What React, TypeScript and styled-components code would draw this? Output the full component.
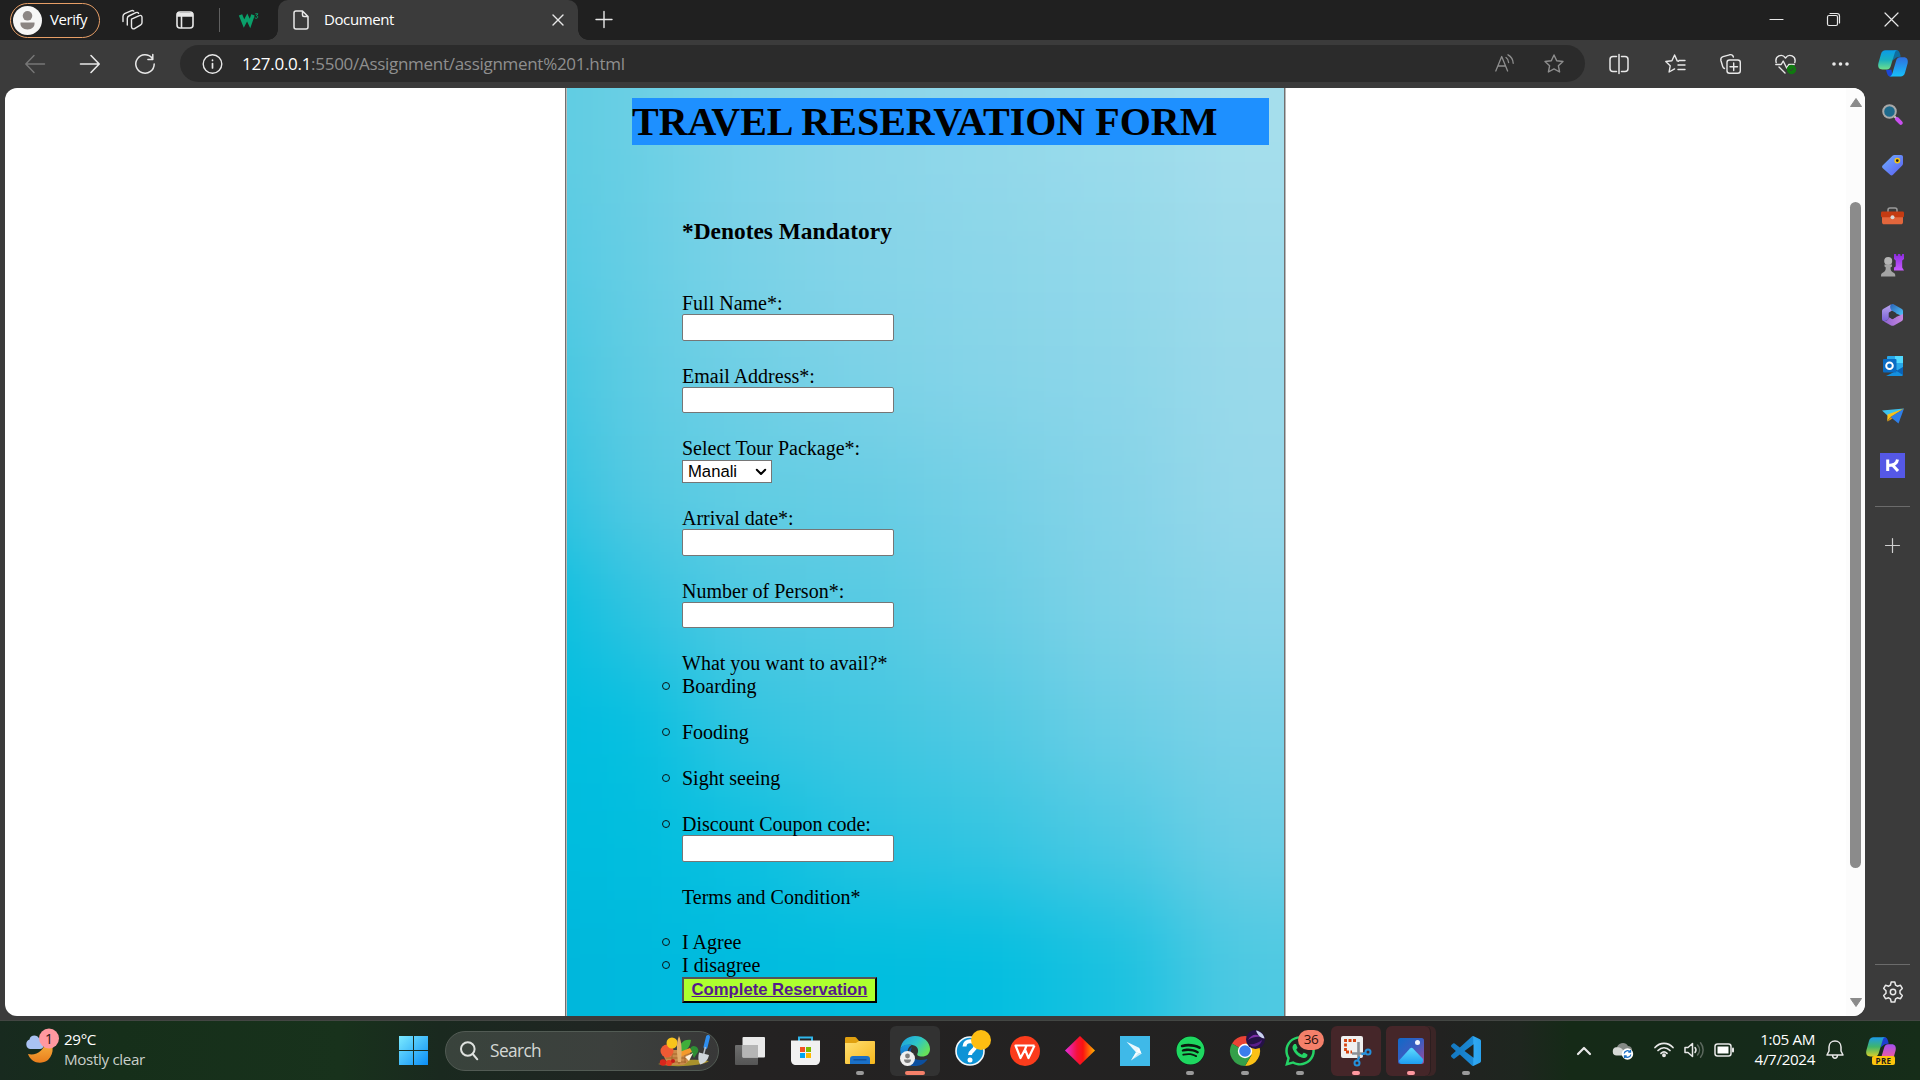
import React from "react";
import styled, { createGlobalStyle } from "styled-components";
import { FaSpotify, FaWhatsapp } from "react-icons/fa";

const uiFont = `"Segoe UI", "Open Sans", "Noto Sans", sans-serif`;
const serif = `"Times New Roman", "Liberation Serif", serif`;

const GlobalStyle = createGlobalStyle`
  *, *::before, *::after { box-sizing: border-box; }
  body { margin: 0; background: #3b3b3b; overflow: hidden; }
  svg { display: block; flex: none; overflow: visible; }
`;

const Screen = styled.div`
  width: 1920px;
  height: 1080px;
  display: flex;
  flex-direction: column;
  background: #3b3b3b;
  color: #fff;
  font-family: ${uiFont};
  overflow: hidden;
`;

/* ---------- tab strip ---------- */
const TabStrip = styled.header`
  height: 40px;
  flex: none;
  display: flex;
  align-items: center;
  background: #202020;
`;
const Profile = styled.div`
  width: 90px;
  height: 35px;
  margin-left: 10px;
  padding-left: 2px;
  display: flex;
  align-items: center;
  gap: 8px;
  border: 1.5px solid #e79e66;
  border-radius: 18px;
  font-size: 15px;
  line-height: 20px;
  letter-spacing: -0.45px;
  span { padding-bottom: 2px; }
`;
const Gap = styled.div<{ $w: number }>`
  width: ${(p) => p.$w}px;
  flex: none;
`;
const TabDivider = styled.div`
  width: 1px;
  height: 24px;
  background: #606060;
`;
const ActiveTab = styled.div`
  position: relative;
  width: 300px;
  height: 40px;
  padding: 0 15px 0 15px;
  display: flex;
  align-items: center;
  background: #3b3b3b;
  border-radius: 10px 10px 0 0;
  font-size: 15px;
  letter-spacing: -0.4px;
  &::before, &::after {
    content: "";
    position: absolute;
    bottom: 0;
    width: 10px;
    height: 10px;
  }
  &::before { left: -10px; background: radial-gradient(circle at 0 0, transparent 9.5px, #3b3b3b 10px); }
  &::after { right: -10px; background: radial-gradient(circle at 100% 0, transparent 9.5px, #3b3b3b 10px); }
`;
const TabTitle = styled.span`
  flex: 1;
  margin-left: 15px;
  padding-bottom: 2px;
`;
const WindowButtons = styled.div`
  margin-left: auto;
  display: flex;
  align-items: center;
  gap: 44px;
  padding: 0 22px 1px 0;
`;

/* ---------- toolbar ---------- */
const Toolbar = styled.div`
  height: 48px;
  flex: none;
  display: flex;
  align-items: center;
  padding: 0 12px 1px 25px;
`;
const NavButtons = styled.div`
  display: flex;
  gap: 35px;
  width: 155px;
`;
const AddressBar = styled.div`
  width: 1405px;
  height: 37px;
  display: flex;
  align-items: center;
  padding: 0 21px 0 23px;
  border-radius: 19px;
  background: #2b2b2b;
`;
const Url = styled.div`
  flex: 1;
  margin-left: 19px;
  padding-bottom: 1px;
  font-size: 17px;
  letter-spacing: -0.29px;
  color: #8f8f8f;
  b { font-weight: 400; color: #fff; }
`;
const AddressActions = styled.div`
  display: flex;
  gap: 29px;
`;
const ToolActions = styled.div`
  flex: 1;
  display: flex;
  align-items: center;
  padding-left: 24px;
`;

/* ---------- viewport ---------- */
const Body = styled.div`
  height: 928px;
  flex: none;
  display: flex;
  padding-left: 5px;
`;
const Page = styled.main`
  width: 1860px;
  display: flex;
  background: #fff;
  border-radius: 12px;
  overflow: hidden;
`;
const FormPanel = styled.section`
  position: relative;
  width: 721px;
  margin-left: 560px;
  border: solid #b9b9b9;
  border-width: 0 1px;
  border-left-color: #707070;
  overflow: hidden;
  color: #000;
  font: 20px/23px ${serif};
`;
const Backdrop = styled.svg`
  position: absolute;
  inset: 0;
`;
const FormBody = styled.form`
  position: relative;
  height: 100%;
  padding: 10px 15px 0 65px;
  border: solid #707070;
  border-width: 0 1px;
  border-left-color: #b9b9b9;
`;
const Title = styled.h1`
  margin: 0;
  height: 47px;
  font-size: 40px;
  line-height: 48px;
  background: #1e90ff;
  white-space: nowrap;
`;
const Fields = styled.div`
  padding: 73px 0 0 50px;
`;
const Notice = styled.h3`
  margin: 0 0 46px;
  font-size: 23.4px;
  line-height: 27px;
`;
const Field = styled.div<{ $after?: number }>`
  margin-bottom: ${(p) => p.$after ?? 23}px;
`;
const Label = styled.label`
  display: block;
  height: 23px;
  line-height: 24px;
`;
const TextInput = styled.input`
  display: block;
  width: 212px;
  height: 26.6px;
  margin: 0;
  padding: 0;
  border: 1.25px solid #767676;
  border-radius: 2px;
  background: #fff;
`;
const PackageSelect = styled.div`
  width: 90px;
  height: 23px;
  margin-top: 1px;
  padding: 0 5px 0 5px;
  display: flex;
  align-items: center;
  justify-content: space-between;
  border: 1px solid #767676;
  background: #fff;
  font: 16.67px "Liberation Sans", Arial, sans-serif;
`;
const Choice = styled.div<{ $after?: number }>`
  display: flex;
  align-items: center;
  height: 23px;
  line-height: 24px;
  margin-left: -20px;
  margin-bottom: ${(p) => p.$after ?? 23}px;
  gap: 12px;
  &::before {
    content: "";
    width: 8px;
    height: 8px;
    border: 1.2px solid #0a1416;
    border-radius: 50%;
  }
`;
const SubmitButton = styled.button`
  display: block;
  width: 195px;
  height: 26px;
  margin: 0;
  padding: 0;
  border: 2px outset #000;
  border-color: #555 #000 #000 #555;
  background: #adff2f;
  color: #551a8b;
  text-decoration: underline;
  font: bold 16.67px/20px "Liberation Sans", Arial, sans-serif;
  white-space: nowrap;
`;

const ScrollTrack = styled.div`
  width: 19px;
  margin-left: auto;
  padding: 10px 0 9px;
  display: flex;
  flex-direction: column;
  align-items: center;
  background: #fcfcfc;
`;
const ScrollThumb = styled.div`
  width: 11px;
  height: 666px;
  margin: 95px 0 auto;
  border-radius: 6px;
  background: #8b8b8b;
`;

/* ---------- sidebar ---------- */
const Sidebar = styled.aside`
  width: 55px;
  display: flex;
  flex-direction: column;
  align-items: center;
  padding-top: 1px;
`;
const SideSlot = styled.div<{ $drop?: number }>`
  height: 50.2px;
  flex: none;
  display: flex;
  align-items: center;
  justify-content: center;
  padding-top: ${(p) => (p.$drop ?? 0) * 2}px;
`;
const SideRule = styled.div`
  width: 35px;
  height: 1px;
  background: #6b6b6b;
`;
const SideTop = styled.div`
  height: 417px;
  flex: none;
`;
const SideBottom = styled.div`
  margin-top: auto;
  display: flex;
  flex-direction: column;
  align-items: center;
  height: 52px;
`;
const AddSlot = styled.div`
  padding-top: 31px;
`;
const GearSlot = styled.div`
  padding-top: 16px;
`;
const KBadge = styled.div`
  width: 25px;
  height: 25px;
  background: #5558e6;
`;

/* ---------- taskbar ---------- */
const Taskbar = styled.footer`
  height: 60px;
  margin-top: 4px;
  flex: none;
  display: flex;
  align-items: center;
  border-top: 1px solid #434643;
  background: linear-gradient(90deg, #182a1f 0, #162f1a 120px, #18321c 340px, #1a291f 440px, #1f2622 580px, #242222 740px,
    #222221 1440px, #1e261f 1520px, #152a17 1570px, #152a1a 1760px, #162d19 1920px);
`;
const Weather = styled.div`
  width: 399px;
  display: flex;
  align-items: center;
  padding-left: 25px;
  gap: 5px;
`;
const TwoLines = styled.div<{ $right?: boolean }>`
  padding-bottom: 4px;
  font-size: 15.2px;
  line-height: 20px;
  letter-spacing: -0.35px;
  white-space: nowrap;
  text-align: ${(p) => (p.$right ? "right" : "left")};
  span { color: #c9cfca; }
`;
const SearchBox = styled.div`
  width: 274px;
  height: 40px;
  margin: 0 6px 0 17px;
  padding: 0 7px 0 14px;
  display: flex;
  align-items: center;
  border: 1px solid #525b54;
  border-radius: 20px;
  background: linear-gradient(90deg, #39433c, #3c403d 60%, #383838);
  color: #d5d8d5;
  font-size: 17.3px;
  letter-spacing: -0.6px;
`;
const SearchText = styled.span`
  flex: 1;
  margin-left: 12px;
  padding-bottom: 1px;
`;
const Apps = styled.div`
  display: flex;
  gap: 5px;
`;
const AppSlot = styled.div<{ $tint?: string; $w?: number; $before?: number }>`
  position: relative;
  width: ${(p) => p.$w ?? 50}px;
  height: 50px;
  margin-left: ${(p) => p.$before ?? 0}px;
  display: flex;
  align-items: center;
  justify-content: center;
  border-radius: 6px;
  background: ${(p) => p.$tint ?? "transparent"};
`;
const PhotoStack = styled.div`
  width: 50px;
  border-radius: 6px;
  background: #3b2526;
`;
const PhotoSlot = styled(AppSlot)`
  width: 45px;
  padding-left: 6px;
  border-right: 1px solid #2c1e1f;
`;
const Indicator = styled.i<{ $w?: number; $c?: string; $shift?: number }>`
  position: absolute;
  bottom: 1px;
  left: calc(50% + ${(p) => p.$shift ?? 0}px);
  width: ${(p) => p.$w ?? 8}px;
  height: 4px;
  transform: translateX(-50%);
  border-radius: 2px;
  background: ${(p) => p.$c ?? "#9a9a9a"};
`;
const CountBadge = styled.span`
  position: absolute;
  top: 4px;
  left: 23px;
  width: 26px;
  height: 20px;
  border-radius: 10px;
  background: #f4806a;
  color: #2a0f0a;
  font-size: 13.5px;
  line-height: 18px;
  text-align: center;
  letter-spacing: -0.4px;
`;
const Tray = styled.div`
  margin-left: auto;
  padding-right: 24px;
  display: flex;
  align-items: center;
`;

/* ---------- backdrop colours, row by row ---------- */
const water = [
  ["#5bcbe2", "#69cfe4", "#7fd3e8", "#8ad5e9", "#92d8ea", "#9adbeb", "#a5deec"],
  ["#50c9e3", "#66cee4", "#7ad2e7", "#85d4e8", "#8bd6e9", "#92d8ea", "#9edbeb"],
  ["#3dc5e0", "#5fcce3", "#70cfe5", "#7cd2e7", "#85d4e8", "#8cd6e9", "#99d9ea"],
  ["#28c1e0", "#54c9e2", "#62cde3", "#68cde4", "#75d0e6", "#84d3e8", "#96d8ea"],
  ["#00bedf", "#30c3e0", "#4fc9e2", "#56cae3", "#68cde4", "#7dd2e7", "#8ad5e9"],
  ["#00bddf", "#04bfe0", "#34c5e1", "#41c7e1", "#50c9e2", "#6acee5", "#7ad1e7"],
  ["#00bcde", "#00bede", "#0cc0e0", "#28c3e1", "#34c5e1", "#4cc9e3", "#6ccee5"],
  ["#00b6db", "#00b9dd", "#00bcdf", "#00bedf", "#02bee0", "#18c1e0", "#4ec9e2"],
];
const colX = [-120, 14, 120, 239, 358, 478, 608, 900];
const Water = () => (
  <Backdrop width="719" height="928">
    <defs>
      <filter id="soft" x="-300" y="-300" width="1400" height="1600" filterUnits="userSpaceOnUse" colorInterpolationFilters="sRGB">
        <feGaussianBlur stdDeviation="44" />
      </filter>
    </defs>
    <g filter="url(#soft)">
      {water.map((row, r) =>
        row.map((c, i) => {
          const top = r === 0 ? -150 : r * 116;
          const bottom = r === 7 ? 1080 : (r + 1) * 116;
          return <rect key={`${r}-${i}`} x={colX[i]} y={top} width={colX[i + 1] - colX[i] + 1} height={bottom - top + 1} fill={c} />;
        })
      )}
    </g>
  </Backdrop>
);

/* ---------- icons ---------- */
type LineProps = { w?: number; h?: number; c?: string; sw?: number; children: React.ReactNode };
const Line = ({ w = 20, h = 20, c = "#e8e8e8", sw = 1.4, children }: LineProps) => (
  <svg width={w} height={h} viewBox={`0 0 ${w} ${h}`} fill="none" stroke={c} strokeWidth={sw} strokeLinecap="round" strokeLinejoin="round">
    {children}
  </svg>
);

const Avatar = () => (
  <svg width="29" height="29" viewBox="0 0 29 29">
    <circle cx="14.5" cy="14.5" r="14.5" fill="#f6f6f6" />
    <circle cx="14.5" cy="9.8" r="4.8" fill="#8b8583" />
    <path d="M7.5 16.5h14c.6 3.800-2.500 7-7 7s-7.600-3.200-7-7z" fill="#8b8583" />
  </svg>
);
const Workspaces = () => (
  <Line w={21} h={20}>
    <path d="M9.500 9.200l7.300-3.400c2-.9 3.200-.2 3.200 1.500v5.200c0 1-.4 1.800-1.300 2.300l-5.700 3.600c-1.800 1.100-3.500.3-3.500-1.600z" />
    <path d="M5.300 15V8.500c0-1.200.5-2 1.500-2.500l7-3.300c1.300-.6 2.300-.3 2.800.6M1 11.500V6.200c0-1.200.6-2 1.600-2.600L9 .8c1.200-.5 2-.4 2.700.2" />
  </Line>
);
const TabActions = () => (
  <Line w={18} h={18} sw={1.6}>
    <rect x="1" y="1" width="16" height="16" rx="3" />
    <path d="M1.500 3.800h15M1.500 2.500h15M1.500 5h15M5.500 6v10.500" />
  </Line>
);
const W3 = () => (
  <svg width="20" height="15" viewBox="0 0 20 15" fill="none" stroke="#0aa06a">
    <path d="M1.500 1.800L5 10.500l3.200-6 2.800 6 3-8.700" strokeWidth="3.600" />
    <path d="M16.300.8h2.600l-1.400 1.900c1.700.1 1.700 2.600-.2 2.600-.6 0-1-.2-1.300-.7" strokeWidth="1" />
  </svg>
);
const DocIcon = () => (
  <Line w={16} h={20} sw={1.5}>
    <path d="M1 3c0-1.300.8-2 2-2h6.500L15 6.500V17c0 1.300-.8 2-2 2H3c-1.200 0-2-.7-2-2zM9.500 1v4c0 1 .5 1.500 1.500 1.500h4" />
  </Line>
);
const Reload = () => (
  <Line sw={1.5}>
    <path d="M17.200 4.300A9.200 9.200 0 1 0 19.200 10M17.800.5v4.900h-4.900" />
  </Line>
);
const Copilot = ({ warm }: { warm?: boolean }) => (
  <svg width="30" height="27" viewBox="0 0 30 27">
    <defs>
      <linearGradient id="cpA" x1="0" y1="0" x2="0" y2="1"><stop offset="0" stopColor="#0b9be8" /><stop offset=".5" stopColor="#19b0c0" /><stop offset="1" stopColor="#6fe08a" /></linearGradient>
      <linearGradient id="cpB" x1="0" y1="0" x2="0" y2="1"><stop offset="0" stopColor="#2f6fe0" /><stop offset="1" stopColor="#17c0fa" /></linearGradient>
      <linearGradient id="cpC" x1="0" y1="0" x2="0" y2="1"><stop offset="0" stopColor="#1c9be8" /><stop offset=".5" stopColor="#40b56a" /><stop offset="1" stopColor="#d8cf2a" /></linearGradient>
      <linearGradient id="cpD" x1="0" y1="0" x2="0" y2="1"><stop offset="0" stopColor="#a24ff0" /><stop offset=".6" stopColor="#e65aa8" /><stop offset="1" stopColor="#f57a5a" /></linearGradient>
    </defs>
    <path d="M16 .3h2.500c2.800 0 3.300 2.500 4.300 6.300l-4.300 1-4 3z" fill={warm ? "#1d3fd0" : "#0f6da0"} />
    <path d="M8 19.800h5.500L14.500 26.500H12C9.500 26.500 9 23 8 19.800z" fill={warm ? "#f07a3a" : "#1b47d6"} />
    <path d="M7.500.3H20c-2 0-2.800 1.200-3.400 3.200l-4 13c-.7 2-1.800 3-3.900 3H4.500C.8 19.500-.4 16.800.4 13.300L3 4C3.800 1.500 5.200.3 7.500.3z" fill={warm ? "url(#cpC)" : "url(#cpA)"} />
    <path d="M22.500 26.500H11c2 0 2.800-1.200 3.400-3.200l3.700-12.500c.7-2.200 1.800-3.500 3.900-3.500h3.500c3.700 0 4.900 2.700 4.100 6.200L27 22.800c-.8 2.500-2.200 3.700-4.500 3.700z" fill={warm ? "url(#cpD)" : "url(#cpB)"} />
  </svg>
);
const starPath = "M10 1l2.700 5.700 6.300.8-4.600 4.300 1.200 6.200-5.600-3.100L4.400 18l1.200-6.200L1 7.500l6.300-.8z";

const SearchSide = () => (
  <svg width="21" height="21" viewBox="0 0 21 21">
    <path d="M12 12l3 3" stroke="#c9c9c9" strokeWidth="2" />
    <path d="M15 15l3.800 3.800" stroke="#c94ff0" strokeWidth="4" strokeLinecap="round" />
    <circle cx="7.500" cy="7.500" r="6.300" fill="#1e6a8c" stroke="#a9a9a9" strokeWidth="2" />
  </svg>
);
const TagSide = () => (
  <svg width="21" height="21" viewBox="0 0 21 21">
    <defs><linearGradient id="tag" x1="0" y1="0" x2="1" y2="1"><stop offset="0" stopColor="#6fb0ff" /><stop offset="1" stopColor="#5a5cf0" /></linearGradient></defs>
    <path d="M10.500.8c.6-.6 1.200-.8 2-.8h6.500c1.200 0 2 .8 2 2v6.500c0 .8-.2 1.400-.8 2L11 19.800c-.9.9-2 .9-2.900 0L.8 13.200c-1-.9-1-2 0-3z" fill="url(#tag)" />
    <circle cx="15.300" cy="5.600" r="2.200" fill="#222" stroke="#f5c518" strokeWidth="1.500" />
  </svg>
);
const ToolboxSide = () => (
  <svg width="23" height="18" viewBox="0 0 23 18">
    <path d="M7 5V3c0-1.500.7-2 2-2h5c1.300 0 2 .5 2 2v2" fill="none" stroke="#9b9b9b" strokeWidth="1.500" />
    <path d="M1 9.500h21V15c0 1.500-.8 2.300-2.200 2.300H3.200C1.800 17.300 1 16.500 1 15z" fill="#e2663c" />
    <rect x="0" y="4.500" width="23" height="5.700" rx="1.200" fill="#c43b12" />
    <circle cx="11.500" cy="10.300" r="2" fill="#d8d8d8" />
  </svg>
);
const ChessSide = () => (
  <svg width="23" height="23" viewBox="0 0 23 23">
    <defs><linearGradient id="rook" x1="0" y1="0" x2="0" y2="1"><stop offset="0" stopColor="#8c2be0" /><stop offset="1" stopColor="#c85cff" /></linearGradient></defs>
    <path d="M13 0h2.200v1.800h1.700V0h2.400v1.800H21V0h2v5l-1.800 1.500v7L23 16.500H13v-3l1.700-1V6.500L13 5z" fill="url(#rook)" />
    <circle cx="7.200" cy="7" r="4" fill="#b4b4b4" />
    <path d="M3.500 10.500h7.500v2l-1.500 1c0 3 1 4.200 3.500 5.500.9.500 1.300 1.300 1.300 3.500H0C0 20.300.4 19.500 1.300 19c2.500-1.300 3.500-2.500 3.500-5.500l-1.300-1z" fill="#a3a3a3" />
  </svg>
);
const M365 = () => (
  <svg width="21" height="22" viewBox="0 0 21 22">
    <defs>
      <linearGradient id="mA" x1="0" y1="0" x2="0" y2="1"><stop offset="0" stopColor="#b9a5ee" /><stop offset="1" stopColor="#7a62d8" /></linearGradient>
      <linearGradient id="mB" x1="0" y1="0" x2="1" y2="1"><stop offset="0" stopColor="#2b62b8" /><stop offset="1" stopColor="#4fc8fa" /></linearGradient>
      <linearGradient id="mC" x1="0" y1="0" x2="1" y2="0"><stop offset="0" stopColor="#8d62d0" /><stop offset="1" stopColor="#c687e0" /></linearGradient>
    </defs>
    <path d="M9 .6L1.500 4.800C.5 5.400 0 6.200 0 7.300v7.400c0 1.600.6 2.300 2 2.300 2.500 0 4.800-1.200 4.800-4V8.800L10 6.500z" fill="url(#mA)" />
    <path d="M9 .6c1-.6 2-.7 3 0l7.500 4.200c1 .6 1.500 1.500 1.500 2.500v5L14 9.500 10.500 7.300C8 5.500 7.500 2 9 .6z" fill="url(#mB)" />
    <path d="M21 10v4.700c0 1.100-.5 1.900-1.500 2.500L12 21.400c-1 .6-2 .6-3 0l-7.500-4.200C5 17.500 6.800 15 6.800 13l3.700 2 3.500-2z" fill="url(#mC)" />
    <path d="M10.500 6.900l3.600 2.100v4.100l-3.600 2.100-3.600-2.100V9z" fill="#36383c" />
  </svg>
);
const Outlook = () => (
  <svg width="20" height="20" viewBox="0 0 20 20">
    <rect x="4" y="0" width="16" height="14" rx="1" fill="#28a8ea" />
    <path d="M12 0h8v7h-8z" fill="#50d9ff" />
    <path d="M3 20h15.500c1 0 1.500-.6 1.500-1.500V11l-8 4.500z" fill="#1490df" />
    <path d="M20 11v8l-6.500-4z" fill="#0a62b5" />
    <rect x="0" y="3" width="13.500" height="13.500" rx="1" fill="#0a6cc4" />
    <circle cx="6.500" cy="9.700" r="3.300" fill="none" stroke="#fff" strokeWidth="2" />
  </svg>
);
const PlaneSide = () => (
  <svg width="22" height="16" viewBox="0 0 22 16">
    <path d="M0 2.500L22 .5 6 8z" fill="#3cc3f0" />
    <path d="M22 .5L16.500 15.500 8.500 9z" fill="#2f7fe8" />
    <path d="M22 .5L5.500 6.500l-.3 6.800L8.500 9z" fill="#f8c21c" />
    <path d="M5.300 13.800L8.500 9l2 1.600z" fill="#d9961a" />
  </svg>
);
const KMark = () => (
  <svg width="25" height="25" viewBox="0 0 25 25" fill="none" stroke="#fff" strokeWidth="3">
    <path d="M7.700 6.500v11.500M17.500 6.500c-.5 3.800-3.500 5.800-9 6M12.500 12l5.500 6" />
  </svg>
);
const Gear = () => (
  <Line w={22} h={22} sw={1.5}>
    <path d="M9.200 1h3.600l.8 3.200 1.700 1 3.200-.9 1.800 3.100-2.300 2.400v2.400l2.300 2.400-1.800 3.100-3.200-.9-1.700 1-.8 3.200H9.200l-.8-3.200-1.700-1-3.200.9-1.800-3.100L4 12.200V9.800L1.700 7.400l1.800-3.100 3.200.9 1.700-1z" />
    <circle cx="11" cy="11" r="2.700" />
  </Line>
);

const WeatherIcon = () => (
  <svg width="34" height="40" viewBox="0 0 34 40">
    <defs><linearGradient id="moon" x1="0" y1="0" x2="0" y2="1"><stop offset="0" stopColor="#f9bb45" /><stop offset="1" stopColor="#ea7d1c" /></linearGradient></defs>
    <path d="M21 8c8 4 9 14 2 21-7 5-17 3-20-6 8 2 17-3 18-15z" fill="url(#moon)" />
    <path d="M5 18a5 5 0 0 1-.5-9.500C5 4 12 2.500 14.500 8c4 0 5.500 3 4.500 6s-2 4-4 4z" fill="#a9c2f2" />
    <circle cx="24" cy="7.500" r="10" fill="#ff98a0" />
    <text x="24" y="12.500" fontSize="14" textAnchor="middle" fill="#2b1214" fontFamily='"Open Sans", sans-serif'>1</text>
  </svg>
);
const WinLogo = () => (
  <svg width="29" height="29" viewBox="0 0 29 29">
    <defs><linearGradient id="win" gradientUnits="userSpaceOnUse" x1="0" y1="0" x2="29" y2="29"><stop offset="0" stopColor="#7beaff" /><stop offset="1" stopColor="#0a8df5" /></linearGradient></defs>
    <path d="M0 0h14v14H0zM15 0h14v14H15zM0 15h14v14H0zM15 15h14v14H15z" fill="url(#win)" />
  </svg>
);
const Basket = () => (
  <svg width="56" height="32" viewBox="0 0 56 32">
    <path d="M3 29c14-5 38-5 51-3-6 5-37 7-51 3z" fill="#a8912c" />
    <path d="M8 15h27c1 9-2 14-8 15H17C11 28 8 22 8 15z" fill="#c98a4a" />
    <path d="M10 19h25M10.500 23h24M14 27h17M17 16v13M24 16v13M30 16v12" stroke="#a4652b" strokeWidth="1" />
    <circle cx="12" cy="16" r="6.500" fill="#ee5a34" />
    <circle cx="17" cy="8" r="5.500" fill="#f8c41a" />
    <path d="M24 17c0-8 4-13 12-12-1 8-5 12-12 12z" fill="#3fae3a" />
    <path d="M35 14c2-6 10-2 8 3l-4 6z" fill="#2e8f34" />
    <path d="M22 18l13-5 2 4-12 5z" fill="#f59a2b" />
    <path d="M23 27C21 12 22 6 24 1c3 6 3 16 2 26z" fill="#e2b06e" />
    <path d="M30 22l8-4-4 8z" fill="#fdf1dc" />
    <circle cx="8" cy="27.500" r="3.200" fill="#d8261c" /><circle cx="14" cy="28" r="3" fill="#ea3a22" /><circle cx="18" cy="26" r="2" fill="#c61c16" />
    <path d="M53 2l-2.500 10" stroke="#2f8ff0" strokeWidth="4" strokeLinecap="round" />
    <path d="M50.500 12l-1.800 7" stroke="#b8c0c8" strokeWidth="1.500" />
    <path d="M44 17.500l10 2.500c-1 5-4 8-8.500 9.500C43 27 43 22 44 17.500z" fill="#cfd6dc" />
  </svg>
);
const TaskView = () => (
  <svg width="30" height="28" viewBox="0 0 30 28">
    <defs><linearGradient id="tv" x1="0" y1="0" x2="0" y2="1"><stop offset="0" stopColor="#6e6e6e" /><stop offset="1" stopColor="#555" /></linearGradient></defs>
    <rect x="0" y="8" width="23" height="20" rx="1" fill="url(#tv)" />
    <rect x="7.500" y="0" width="22.500" height="20.500" rx="1" fill="#e9e9e9" />
    <path d="M7.500 8H23v12.500H7.500z" fill="#b5b5b5" />
  </svg>
);
const Store = () => (
  <svg width="29" height="29" viewBox="0 0 29 29">
    <path d="M8 6V1.500h13V6" fill="none" stroke="#2fb6ea" strokeWidth="2" />
    <path d="M0 4.500h29V24c0 3-2 5-5 5H5c-3 0-5-2-5-5z" fill="#f1f1f1" />
    <path d="M9 11h5v5H9z" fill="#f25022" /><path d="M15 11h5v5h-5z" fill="#7fba00" /><path d="M9 17h5v5H9z" fill="#00a4ef" /><path d="M15 17h5v5h-5z" fill="#ffb900" />
  </svg>
);
const Folder = () => (
  <svg width="30" height="27" viewBox="0 0 30 27">
    <defs><linearGradient id="fold" x1="0" y1="0" x2="1" y2="1"><stop offset="0" stopColor="#ffdf72" /><stop offset="1" stopColor="#f6b71c" /></linearGradient></defs>
    <path d="M0 1.500C0 .5.500 0 1.500 0h8c.9 0 1.400.2 2 .9L14 4H28.500c1 0 1.500.500 1.500 1.500V9H0z" fill="#e0a010" />
    <path d="M0 6h11l3-2h14.500c1 0 1.500.5 1.500 1.500v20c0 1-.5 1.500-1.500 1.500h-27C.500 27 0 26.500 0 25.500z" fill="url(#fold)" />
    <path d="M5 27v-5c0-2 1-3 3-3h14c2 0 3 1 3 3v5z" fill="#1a70c8" />
    <path d="M8.500 22.800h13" stroke="#0f4a90" strokeWidth="1.200" />
  </svg>
);
const Edge = () => (
  <svg width="30" height="30" viewBox="0 0 30 30">
    <defs>
      <linearGradient id="edA" x1="0" y1="0" x2="1" y2=".6"><stop offset="0" stopColor="#1d9be0" /><stop offset=".55" stopColor="#2cc5c8" /><stop offset="1" stopColor="#66e05a" /></linearGradient>
      <linearGradient id="edB" x1="0" y1="0" x2="0" y2="1"><stop offset="0" stopColor="#1b98e0" /><stop offset="1" stopColor="#0d55b0" /></linearGradient>
    </defs>
    <path d="M.3 13C1.500 5 7.500 0 15 0c9 0 15 6.500 15 13 0 5-3.500 7.500-8 7.500-3.500 0-5.500-1.300-4.500-3 1.500-3 .5-7.500-5-8.500C7 8.200 2.500 9.500.3 13z" fill="url(#edA)" />
    <path d="M.2 13.500C1.500 9.500 6.500 7.800 11.500 9c-3 1.500-4 4.500-4 7.500 0 6 4 11.500 10 13C8.500 32 0 25 .2 13.500z" fill="url(#edB)" />
    <path d="M12 11c-4 8 2 16 15.500 12C24 29 18 31 13 29.500 6 26.500 6 15 12 11z" fill="#0c4f9e" />
    <circle cx="7.500" cy="22.500" r="7.500" fill="#efefef" />
    <circle cx="7.500" cy="20" r="2.400" fill="#7e7e7e" />
    <path d="M4 23.500h7c0 2.500-1.500 3.500-3.500 3.500S4 26 4 23.500z" fill="#7e7e7e" />
  </svg>
);
const Help = () => (
  <svg width="30" height="30" viewBox="0 0 30 30">
    <circle cx="15" cy="15" r="14" fill="#0d93d6" stroke="#f2f8fb" strokeWidth="1.600" />
    <path d="M9.500 10.500c0-7 11-7 11-.5 0 4.500-5.500 4.500-5.500 9" fill="none" stroke="#fff" strokeWidth="4" />
    <circle cx="15" cy="24" r="2.500" fill="#fff" />
    <circle cx="26" cy="4" r="10" fill="#fdbd12" />
  </svg>
);
const Wps = () => (
  <svg width="30" height="30" viewBox="0 0 30 30">
    <circle cx="15" cy="15" r="15" fill="#fb3c1c" />
    <path d="M24.500 9.500H5.500l5 12.500 4.500-8.500M12.500 9.500h4L15 13.500l3.500 8.500 6-12.500" fill="none" stroke="#fff" strokeWidth="2.200" strokeLinejoin="round" />
  </svg>
);
const Diamond = () => (
  <svg width="30" height="29" viewBox="0 0 30 29">
    <defs><linearGradient id="dia"><stop offset="0" stopColor="#e52be0" /><stop offset=".4" stopColor="#f5123c" /><stop offset=".6" stopColor="#fa1410" /><stop offset="1" stopColor="#ffb400" /></linearGradient></defs>
    <path d="M15 0l15 14.500L15 29 0 14.500z" fill="url(#dia)" />
  </svg>
);
const BlueBird = () => (
  <svg width="30" height="30" viewBox="0 0 30 30">
    <path d="M0 0h30v30H0z" fill="#3fb9e8" />
    <path d="M6.500 5.800l12.500 6 2.500 6-5.500-1.500z" fill="#eaf8fd" />
    <path d="M19 11.800l2.500 6-5.500-1.500z" fill="#fff" />
    <path d="M16 16.300l5.500 1.500L11 24.500z" fill="#c9e9f5" />
    <path d="M16 16.300l2.500.7L11 24.500z" fill="#f8fdff" />
  </svg>
);
const Chrome = () => (
  <svg width="30" height="30" viewBox="0 0 30 30">
    <path d="M15 15L2 7.500A15 15 0 0 1 28 7.500z" fill="#ea4335" />
    <path d="M15 15V7.500h13A15 15 0 0 1 15 30l6.500-11z" fill="#fbc116" />
    <path d="M15 15l6.500 3.700L15 30A15 15 0 0 1 2 7.500z" fill="#34a04a" />
    <circle cx="15" cy="15" r="7.200" fill="#fff" /><circle cx="15" cy="15" r="5.800" fill="#3b7ded" />
    <circle cx="25.500" cy="3.500" r="9.500" fill="#251247" />
    <path d="M18 4c3-5 8-7 13-3-4-.5-9 0-13 3z" fill="#7b2fa8" />
    <path d="M26-5.500c4 .5 8 4 8.500 8-3 0-7-3-8.500-8z" fill="#c9d3ee" />
    <path d="M19 8c4 1 9-1 13-4-1 6-9 9-13 4z" fill="#5a1e8c" />
  </svg>
);
const Snip = () => (
  <svg width="30" height="30" viewBox="0 0 30 30">
    <rect x="0" y="0" width="22" height="22" rx="2" fill="#f0f0f0" />
    <path d="M15 4.500H4.500V16H11" fill="none" stroke="#d8430f" strokeWidth="2.800" strokeDasharray="3 1.500" />
    <path d="M17.500 6v17M11 17.500h13" stroke="#8b9096" strokeWidth="2.600" />
    <circle cx="16" cy="27" r="2.500" fill="none" stroke="#2391dc" strokeWidth="2" /><circle cx="27" cy="16" r="2.500" fill="none" stroke="#2391dc" strokeWidth="2" />
    <path d="M17 24.500l1.500-4M24.500 17l-4 1.500" stroke="#2391dc" strokeWidth="2" />
  </svg>
);
const Photos = () => (
  <svg width="26" height="26" viewBox="0 0 26 26">
    <defs>
      <linearGradient id="phA" x1="0" y1="0" x2="1" y2="1"><stop offset="0" stopColor="#0f6ac8" /><stop offset=".5" stopColor="#3b5cc0" /><stop offset="1" stopColor="#a04a98" /></linearGradient>
      <linearGradient id="phB" x1="0" y1="0" x2="0" y2="1"><stop offset="0" stopColor="#5ddcff" /><stop offset="1" stopColor="#1f9df0" /></linearGradient>
    </defs>
    <rect width="26" height="26" rx="2.500" fill="url(#phA)" />
    <path d="M1 22.500L12 10.500c1-1 2-1 3 0l10 10.500c.5 3-1 5-3 5H4c-2 0-3-1.500-3-3.500z" fill="url(#phB)" />
    <circle cx="19.500" cy="4.500" r="2.500" fill="#f1f5fb" />
  </svg>
);
const VsCode = () => (
  <svg width="30" height="30" viewBox="0 0 24 24">
    <defs><linearGradient id="vs"><stop offset="0" stopColor="#1478c0" /><stop offset=".72" stopColor="#1b8ad6" /><stop offset=".76" stopColor="#2fa8f2" /><stop offset="1" stopColor="#2aa2ee" /></linearGradient></defs>
    <path fill="url(#vs)" d="M23.150 2.587L18.210.210a1.494 1.494 0 0 0-1.705.290l-9.460 8.630-4.120-3.128a.999.999 0 0 0-1.276.057L.327 7.261A1 1 0 0 0 .326 8.740L3.899 12 .326 15.260a1 1 0 0 0 .001 1.479L1.650 17.940a.999.999 0 0 0 1.276.057l4.120-3.128 9.460 8.630a1.492 1.492 0 0 0 1.704.290l4.942-2.377A1.500 1.500 0 0 0 24 20.060V3.939a1.500 1.500 0 0 0-.850-1.352zm-5.146 14.861L10.826 12l7.178-5.448v10.896z" />
  </svg>
);
const Spot = styled.div`
  display: flex;
  border-radius: 50%;
  color: #1ed760;
  background: #0b1a10;
`;
const CloudSync = () => (
  <svg width="21" height="18" viewBox="0 0 21 18">
    <path d="M4 13a4 4 0 0 1 0-8C6 0 13-.5 15 4c4 0 5 4 3 7z" fill="#858a86" />
    <path d="M4 13.500a4 4 0 0 1-.5-8c5-1 8 3 8 8z" fill="#d5d8d5" />
    <circle cx="14.500" cy="12" r="5.700" fill="#fff" />
    <path d="M11.200 11.500a3.400 3.400 0 0 1 6-1.500M17.800 12.500a3.400 3.400 0 0 1-6 1.500M17.500 8v2.200h-2.200M11.500 16v-2.200h2.200" fill="none" stroke="#1a6fc4" strokeWidth="1.300" />
  </svg>
);
const PreCopilot = styled.div`
  position: relative;
  width: 30px;
  height: 28px;
`;
const PreTag = styled.span`
  position: absolute;
  left: 6px;
  bottom: 0;
  width: 23px;
  height: 9px;
  border-radius: 2px;
  background: #fcc40c;
  color: #1b1b1b;
  font: 700 8px/9px ${uiFont};
  text-align: center;
  letter-spacing: 0.4px;
`;

const textFields = ["Full Name*:", "Email Address*:"];
const laterFields = ["Arrival date*:", "Number of Person*:"];
const sideIcons = [
  { Icon: SearchSide, drop: 0 },
  { Icon: TagSide, drop: 1 },
  { Icon: ToolboxSide, drop: 1.5 },
  { Icon: ChessSide, drop: 0.5 },
  { Icon: M365, drop: 0.5 },
  { Icon: Outlook, drop: 0.5 },
  { Icon: PlaneSide, drop: 0.5 },
];

export default function App() {
  return (
    <Screen>
      <GlobalStyle />
      <TabStrip>
        <Profile><Avatar /><span>Verify</span></Profile>
        <Gap $w={22} /><Workspaces />
        <Gap $w={33} /><TabActions />
        <Gap $w={25} /><TabDivider />
        <Gap $w={19} /><W3 />
        <Gap $w={19} />
        <ActiveTab>
          <DocIcon />
          <TabTitle>Document</TabTitle>
          <Line w={10} h={10}><path d="M0 0l10 10M10 0L0 10" /></Line>
        </ActiveTab>
        <Gap $w={17} />
        <Line w={18} h={18}><path d="M9 .5v16M1 8.500h16" /></Line>
        <WindowButtons>
          <Line w={13} h={13} sw={1.2}><path d="M-1 6.500h13" /></Line>
          <Line w={13} h={13} sw={1.2}><rect x="-.5" y="2.500" width="10" height="10" rx="1.500" /><path d="M2 .5h7c1.700 0 2.500.8 2.500 2.500v7" /></Line>
          <Line w={13} h={13} sw={1.2}><path d="M0 0l13 13M13 0L0 13" /></Line>
        </WindowButtons>
      </TabStrip>

      <Toolbar>
        <NavButtons>
          <Line c="#777"><path d="M19.500 10H1M9 1.500L.8 10 9 18.500" /></Line>
          <Line sw={1.6}><path d="M.5 10H19M11 1.500l8.200 8.500-8.200 8.500" /></Line>
          <Reload />
        </NavButtons>
        <AddressBar>
          <Line><circle cx="9.500" cy="10" r="9.300" /><path d="M9.500 9.500V14M9.500 6.200v.2" strokeWidth="1.700" /></Line>
          <Url><b>127.0.0.1</b>:5500/Assignment/assignment%201.html</Url>
          <AddressActions>
            <Line c="#8e8e8e" w={20} h={18} sw={1.3}><path d="M.8 17L6.700 2.500 12.600 17M2.800 12h7.800M11 3.500c1.600 1 2.400 2.500 2.600 5M13 .8c3.300 1.700 5 4.500 5.200 8.500" /></Line>
            <Line c="#8e8e8e"><path d={starPath} /></Line>
          </AddressActions>
        </AddressBar>
        <ToolActions>
          <Line sw={1.5}><path d="M7.500 2.500H4c-2 0-3 1-3 3v9c0 2 1 3 3 3h3.500M12.500 2.500H16c2 0 3 1 3 3v9c0 2-1 3-3 3h-3.500M10 .5v19" /></Line>
          <Gap $w={36} />
          <Line w={21}><path d="M13.500 7.200l-1.300-.3L9.600 1 6.900 6.700.8 7.500l4.400 4.300L4.100 18l5.500-3.100M14 6.500h6M13 11h7M13 15.500h7" /></Line>
          <Gap $w={34} />
          <Line w={21}><rect x="7" y="6" width="13.300" height="13.300" rx="2.500" /><path d="M13.700 9v7.500M10 12.700h7.500M4.500 14.500C3.500 14 3 13.500 2.700 12.500L.9 6.500C.5 4.500 1 3.200 3 2.600L9.500.8c2-.5 3.300 0 3.900 2.200" /></Line>
          <Gap $w={34} />
          <Line w={21}>
            <path d="M1.200 8.500C-.5 2 7-1 10.500 4 14-1 21.500 2 19.800 8.500M.8 10.500h5.400l2-3.500 3.500 7 2-3.500h5.500M4 13l6 6" />
            <circle cx="16.500" cy="15.500" r="4" fill="#117a11" stroke="#117a11" /><path d="M14.800 15.500l1.300 1.300 2.200-2.400" stroke="#3b3b3b" strokeWidth="1" />
          </Line>
          <Gap $w={36} />
          <Line w={17} h={4} sw={0}><g fill="#e8e8e8"><circle cx="2" cy="2" r="1.800" /><circle cx="8.500" cy="2" r="1.800" /><circle cx="15" cy="2" r="1.800" /></g></Line>
          <Gap $w={29} />
          <Copilot />
        </ToolActions>
      </Toolbar>

      <Body>
        <Page>
          <FormPanel>
            <Water />
            <FormBody>
              <Title>TRAVEL RESERVATION FORM</Title>
              <Fields>
                <Notice>*Denotes Mandatory</Notice>
                {textFields.map((t) => (
                  <Field key={t}><Label>{t}</Label><TextInput /></Field>
                ))}
                <Field>
                  <Label>Select Tour Package*:</Label>
                  <PackageSelect>
                    Manali
                    <Line w={10} h={6} c="#000" sw={2}><path d="M.8.8L5 5l4.200-4.200" /></Line>
                  </PackageSelect>
                </Field>
                {laterFields.map((t) => (
                  <Field key={t}><Label>{t}</Label><TextInput /></Field>
                ))}
                <Label>What you want to avail?*</Label>
                <Choice>Boarding</Choice>
                <Choice>Fooding</Choice>
                <Choice>Sight seeing</Choice>
                <Choice $after={0}>Discount Coupon code:</Choice>
                <Field><TextInput /></Field>
                <Field><Label>Terms and Condition*</Label></Field>
                <Choice $after={0}>I Agree</Choice>
                <Choice $after={0}>I disagree</Choice>
                <SubmitButton type="button">Complete Reservation</SubmitButton>
              </Fields>
            </FormBody>
          </FormPanel>
          <ScrollTrack>
            <svg width="12" height="9" viewBox="0 0 12 9"><path d="M6 .5L11.500 8.500H.5z" fill="#8b8b8b" stroke="#8b8b8b" strokeLinejoin="round" /></svg>
            <ScrollThumb />
            <svg width="12" height="9" viewBox="0 0 12 9"><path d="M6 8.500L11.500.5H.5z" fill="#8b8b8b" stroke="#8b8b8b" strokeLinejoin="round" /></svg>
          </ScrollTrack>
        </Page>
        <Sidebar>
          <SideTop>
            {sideIcons.map(({ Icon, drop }, i) => <SideSlot key={i} $drop={drop}><Icon /></SideSlot>)}
            <SideSlot><KBadge><KMark /></KBadge></SideSlot>
          </SideTop>
          <SideRule />
          <AddSlot><Line w={15} h={15} c="#cfcfcf" sw={1.2}><path d="M7.500.5v14M.5 7.500h14" /></Line></AddSlot>
          <SideBottom>
            <SideRule />
            <GearSlot><Gear /></GearSlot>
          </SideBottom>
        </Sidebar>
      </Body>

      <Taskbar>
        <Weather>
          <WeatherIcon />
          <TwoLines>29°C<br /><span>Mostly clear</span></TwoLines>
        </Weather>
        <WinLogo />
        <SearchBox>
          <Line w={18} h={20} c="#dfe2df" sw={2}><circle cx="7.800" cy="8" r="6.800" /><path d="M12.800 13l4.500 5.300" /></Line>
          <SearchText>Search</SearchText>
          <Basket />
        </SearchBox>
        <Apps>
          <AppSlot><TaskView /></AppSlot>
          <AppSlot><Store /></AppSlot>
          <AppSlot><Folder /><Indicator /></AppSlot>
          <AppSlot $tint="#323232"><Edge /><Indicator $w={20} $c="#f4806a" /></AppSlot>
          <AppSlot><Help /></AppSlot>
          <AppSlot><Wps /></AppSlot>
          <AppSlot><Diamond /></AppSlot>
          <AppSlot><BlueBird /></AppSlot>
          <AppSlot><Spot><FaSpotify size={29} /></Spot><Indicator /></AppSlot>
          <AppSlot><Chrome /><Indicator /></AppSlot>
          <AppSlot><FaWhatsapp size={34} color="#25d366" /><CountBadge>36</CountBadge><Indicator /></AppSlot>
          <AppSlot $before={1} $tint="#452629"><Snip /><Indicator $c="#ff98a0" /></AppSlot>
          <PhotoStack><PhotoSlot $tint="#452629"><Photos /><Indicator $c="#ff98a0" $shift={3} /></PhotoSlot></PhotoStack>
          <AppSlot><VsCode /><Indicator /></AppSlot>
        </Apps>
        <Tray>
          <Line w={14} h={8} sw={2.200}><path d="M1 7l6-6 6 6" /></Line>
          <Gap $w={22} /><CloudSync />
          <Gap $w={20} />
          <Line w={20} h={17} sw={1.700}><path d="M1 5.500c5-5.500 13-5.500 18 0M4 8.500c3.500-3.700 8.500-3.700 12 0M7 11.300c1.800-1.800 4.200-1.800 6 0" /><circle cx="10" cy="13.300" r="1.100" fill="#e8e8e8" /></Line>
          <Gap $w={10} />
          <Line w={20} h={17} sw={1.500}><path d="M1 5.500h3l4.500-4v13L4 10.500H1zM11 5.500c1.200 1.500 1.200 3.500 0 5" /><path d="M13.500 3c2.700 3 2.700 7 0 10M16.500.8c3.500 4.300 3.500 10.100 0 14.400" stroke="#5d695f" /></Line>
          <Gap $w={10} />
          <Line w={20} h={16} sw={1.500}><rect x="1" y="1" width="16" height="12" rx="2.500" /><rect x="3.500" y="3.500" width="11" height="7" fill="#fff" stroke="none" /><path d="M19 5.500v3" strokeWidth="2" /></Line>
          <Gap $w={21} />
          <TwoLines $right>1:05 AM<br />4/7/2024</TwoLines>
          <Gap $w={11} />
          <Line w={18} h={22} sw={1.500}><path d="M9 1C5.500 1 3 3.500 3 7v4l-2 4h16l-2-4V7c0-3.500-2.500-6-6-6zM6.500 15.500c.2 1.800 1.200 2.700 2.500 2.700s2.300-.9 2.500-2.700" /></Line>
          <Gap $w={22} />
          <PreCopilot><Copilot warm /><PreTag>PRE</PreTag></PreCopilot>
        </Tray>
      </Taskbar>
    </Screen>
  );
}
